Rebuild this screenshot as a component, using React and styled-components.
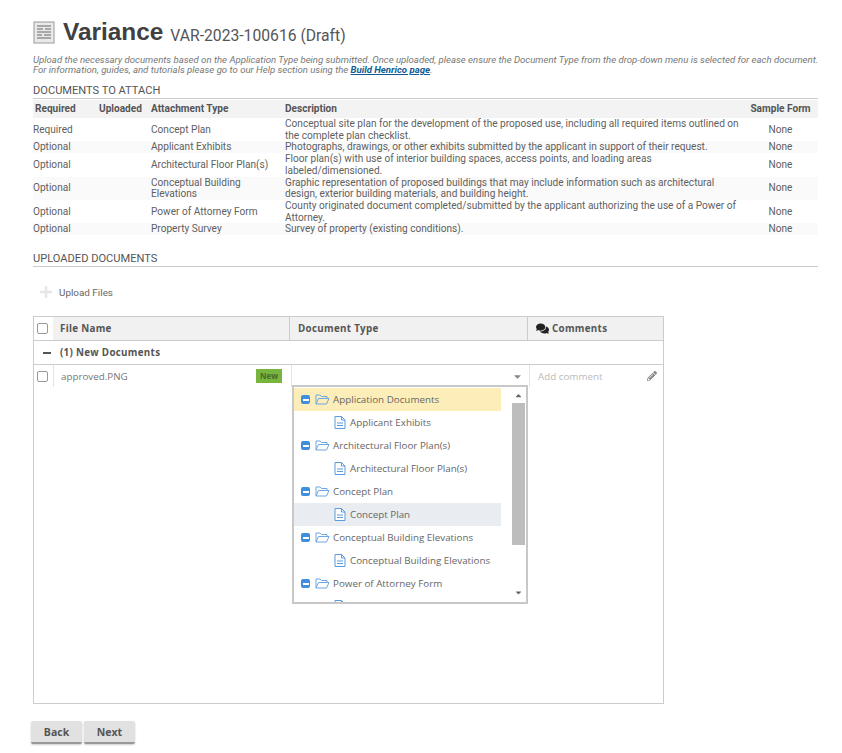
import React from "react";
import styled, { createGlobalStyle } from "styled-components";
import { FaComments, FaPencilAlt, FaPlus, FaCaretDown, FaCaretUp } from "react-icons/fa";

const GlobalStyle = createGlobalStyle`
  html, body {
    margin: 0;
    padding: 0;
    background: #fff;
  }
  body {
    font-family: Roboto, "Liberation Sans", sans-serif;
    color: #555;
  }
`;

const Page = styled.div`
  width: 842px;
  height: 753px;
  box-sizing: border-box;
  padding: 17px 24px 0 33px;
  overflow: hidden;
`;

const TitleRow = styled.div`
  display: flex;
  align-items: center;
  height: 30px;
`;

const TitleIcon = styled.svg`
  width: 22px;
  height: 23px;
  margin-right: 8px;
`;

const Title = styled.h1`
  margin: 0;
  font-family: "Liberation Sans", Arial, sans-serif;
  font-size: 24.4px;
  font-weight: 700;
  color: #404040;
`;

const RecordId = styled.span`
  margin: 6px 0 0 7px;
  font-size: 15.7px;
  color: #555;
`;

const Intro = styled.p`
  margin: 8px 0 0;
  font-size: 9.6px;
  line-height: 10px;
  font-style: italic;
  color: #777;
  white-space: nowrap;
`;

const HelpLink = styled.a`
  font-weight: 700;
  color: #0f5c94;
  text-decoration: underline;
`;

const SectionTitle = styled.div`
  margin-top: ${(p) => p.$top}px;
  padding-bottom: 1px;
  height: 12px;
  line-height: 12px;
  font-size: 11.1px;
  color: #555;
  border-bottom: 1px solid #ccc;
`;

const AttachTable = styled.div`
  display: grid;
  grid-template-columns: 64px 52px 134px 460px 75px;
  margin-top: 1px;
  font-size: 10.1px;
  line-height: 11.7px;
  color: #5f5f5f;
`;

const HeadCell = styled.div`
  height: 18px;
  line-height: 18px;
  padding-left: ${(p) => (p.$center ? 0 : 2)}px;
  background: #f3f3f3;
  font-weight: 700;
  color: #555;
  white-space: nowrap;
  text-align: ${(p) => (p.$center ? "center" : "left")};
`;

const BodyCell = styled.div`
  display: flex;
  align-items: center;
  justify-content: ${(p) => (p.$center ? "center" : "flex-start")};
  background: ${(p) => (p.$odd ? "#fafafa" : "#fff")};
  padding-left: ${(p) => p.$pad || 0}px;
`;

const Toolbar = styled.div`
  display: flex;
  align-items: center;
  height: 24px;
  margin-top: 13px;
  padding-left: 6px;
  font-size: 9.9px;
  color: #666;
  svg {
    width: 14px;
    height: 14px;
    color: #e6e6e6;
    margin-right: 6px;
  }
`;

const GridBox = styled.div`
  position: relative;
  width: 631px;
  height: 388px;
  box-sizing: border-box;
  margin-top: 12px;
  border: 1px solid #ccc;
  font-family: "Open Sans", sans-serif;
  font-size: 9.8px;
`;

const GridHeader = styled.div`
  display: grid;
  grid-template-columns: 19px 236px 238px 1fr;
  height: 24px;
  border-bottom: 1px solid #ccc;
  box-sizing: border-box;
  background: #f1f1f1;
  font-weight: 700;
  color: #555;
  letter-spacing: 0.3px;
`;

const HeaderCell = styled.div`
  display: flex;
  align-items: center;
  gap: 3px;
  padding-left: ${(p) => p.$pad || 7}px;
  border-left: ${(p) => (p.$line ? "1px solid #ccc" : "none")};
  background: ${(p) => (p.$plain ? "#fff" : "transparent")};
  svg {
    width: 13px;
    height: 13px;
    color: #222;
  }
`;

const Check = styled.span`
  display: block;
  width: 9px;
  height: 9px;
  border: 1px solid #999;
  border-radius: 2px;
  background: #fff;
`;

const GroupRow = styled.div`
  display: flex;
  align-items: center;
  height: 24px;
  box-sizing: border-box;
  padding-left: 9px;
  border-bottom: 1px solid #ccc;
  font-weight: 700;
  color: #555;
  letter-spacing: 0.3px;
`;

const GroupDash = styled.span`
  width: 8px;
  height: 2px;
  margin-right: 9px;
  background: #555;
`;

const FileRow = styled.div`
  display: grid;
  grid-template-columns: 19px 238px 238px 1fr;
  height: 22px;
`;

const FileCell = styled.div`
  display: flex;
  align-items: center;
  justify-content: ${(p) => (p.$spread ? "space-between" : "flex-start")};
  padding: 0 ${(p) => p.$right || 0}px 0 ${(p) => p.$pad || 0}px;
  border-left: ${(p) => (p.$line ? "1px solid #e4e4e4" : "none")};
  color: #777;
  svg {
    width: ${(p) => p.$icon || 10}px;
    height: ${(p) => p.$icon || 10}px;
    color: #888;
  }
`;

const NewBadge = styled.span`
  width: 26px;
  height: 14px;
  line-height: 14px;
  text-align: center;
  font-size: 8px;
  font-weight: 700;
  color: #4a6a2c;
  background: #77b53f;
`;

const Placeholder = styled.span`
  color: #bbb;
`;

const TreePopup = styled.div`
  position: absolute;
  left: 258px;
  top: 68px;
  width: 236px;
  height: 219px;
  box-sizing: border-box;
  border: 2px solid #c8c8c8;
  background: #fff;
  display: flex;
  overflow: hidden;
  color: #666;
`;

const TreeList = styled.div`
  width: 207px;
  margin-top: 1px;
`;

const TreeRow = styled.div`
  display: flex;
  align-items: center;
  flex: none;
  height: 23px;
  padding-left: ${(p) => (p.$child ? 40 : 7)}px;
  background: ${(p) => (p.$selected ? "#fdeeb9" : p.$hover ? "#e9edf2" : "transparent")};
  white-space: nowrap;
`;

const MinusBox = styled.span`
  position: relative;
  width: 9px;
  height: 9px;
  margin-right: 5px;
  border-radius: 2px;
  background: #3f8fdc;
  &::after {
    content: "";
    position: absolute;
    left: 1.5px;
    right: 1.5px;
    top: 3.5px;
    height: 2px;
    background: #fff;
  }
`;

const NodeIcon = styled.svg`
  width: ${(p) => p.$w}px;
  height: 13px;
  margin-right: ${(p) => p.$gap}px;
  flex: none;
`;

const ScrollTrack = styled.div`
  display: flex;
  flex-direction: column;
  align-items: center;
  width: 15px;
  margin-left: 10px;
  padding-top: 4px;
  svg {
    flex: none;
    width: 9px;
    height: 9px;
    color: #666;
  }
`;

const ScrollThumb = styled.div`
  flex: none;
  width: 13px;
  height: 142px;
  margin: 3px 0 43px;
  background: #bdbdbd;
`;

const Buttons = styled.div`
  display: flex;
  gap: 2px;
  margin: 17px 0 0 -2px;
`;

const Button = styled.button`
  width: 51px;
  height: 23px;
  padding: 0;
  border: none;
  border-bottom: 2px solid #999;
  border-radius: 2px;
  background: #e1e1e1;
  box-shadow: 0 1px 2px rgba(0, 0, 0, 0.2);
  font-family: "Open Sans", sans-serif;
  font-size: 10.5px;
  font-weight: 700;
  color: #555;
`;

const attachments = [
  ["Required", "Concept Plan", "Conceptual site plan for the development of the proposed use, including all required items outlined on the complete plan checklist."],
  ["Optional", "Applicant Exhibits", "Photographs, drawings, or other exhibits submitted by the applicant in support of their request."],
  ["Optional", "Architectural Floor Plan(s)", "Floor plan(s) with use of interior building spaces, access points, and loading areas labeled/dimensioned."],
  ["Optional", "Conceptual Building Elevations", "Graphic representation of proposed buildings that may include information such as architectural design, exterior building materials, and building height."],
  ["Optional", "Power of Attorney Form", "County originated document completed/submitted by the applicant authorizing the use of a Power of Attorney."],
  ["Optional", "Property Survey", "Survey of property (existing conditions)."],
];

const tree = [
  ["Application Documents", "Applicant Exhibits"],
  ["Architectural Floor Plan(s)", "Architectural Floor Plan(s)"],
  ["Concept Plan", "Concept Plan"],
  ["Conceptual Building Elevations", "Conceptual Building Elevations"],
  ["Power of Attorney Form", ""],
];

const FormIcon = () => (
  <TitleIcon viewBox="0 0 22 23">
    <rect x="1" y="1" width="20" height="21" fill="#e9e9e9" stroke="#9a9a9a" />
    <path d="M4 5h14M4 8h6M12 8h6M4 11h14M4 14h5M11 14h7M4 17h14" stroke="#666" strokeWidth="1.2" />
  </TitleIcon>
);

const FolderIcon = () => (
  <NodeIcon $w={15} $gap={3} viewBox="0 0 15 13" fill="none" stroke="#6ea6e0" strokeWidth="1">
    <path d="M1 11V2h4l1.5 1.5H12V5.5M1 11l2.5-5.5H14L11.5 11z" />
  </NodeIcon>
);

const FileIcon = () => (
  <NodeIcon $w={12} $gap={4} viewBox="0 0 12 13" fill="#fff" stroke="#5b9be0" strokeWidth="1">
    <path d="M1 .5h6.5L11 4v8.5H1z" />
    <path d="M7.5.5V4H11M3 7h6M3 9.5h6" fill="none" />
  </NodeIcon>
);

const App = () => {
  return (
    <Page>
      <GlobalStyle />
      <TitleRow>
        <FormIcon />
        <Title>Variance</Title>
        <RecordId>VAR-2023-100616 (Draft)</RecordId>
      </TitleRow>
      <Intro>
        Upload the necessary documents based on the Application Type being submitted. Once uploaded, please ensure the Document Type from the drop-down menu is selected for each document.
        <br />
        For information, guides, and tutorials please go to our Help section using the <HelpLink href="#">Build Henrico page</HelpLink>.
      </Intro>

      <SectionTitle $top={10}>DOCUMENTS TO ATTACH</SectionTitle>
      <AttachTable>
        <HeadCell>Required</HeadCell>
        <HeadCell>Uploaded</HeadCell>
        <HeadCell>Attachment Type</HeadCell>
        <HeadCell>Description</HeadCell>
        <HeadCell $center>Sample Form</HeadCell>
        {attachments.map(([required, type, description], i) => (
          <React.Fragment key={type}>
            <BodyCell $odd={i % 2 === 1}>{required}</BodyCell>
            <BodyCell $odd={i % 2 === 1} />
            <BodyCell $odd={i % 2 === 1} $pad={2}>{type}</BodyCell>
            <BodyCell $odd={i % 2 === 1} $pad={2}>{description}</BodyCell>
            <BodyCell $odd={i % 2 === 1} $center>None</BodyCell>
          </React.Fragment>
        ))}
      </AttachTable>

      <SectionTitle $top={18}>UPLOADED DOCUMENTS</SectionTitle>
      <Toolbar>
        <FaPlus />
        Upload Files
      </Toolbar>

      <GridBox>
        <GridHeader>
          <HeaderCell $pad={3} $plain><Check /></HeaderCell>
          <HeaderCell>File Name</HeaderCell>
          <HeaderCell $line $pad={8}>Document Type</HeaderCell>
          <HeaderCell $line $pad={8}><FaComments />Comments</HeaderCell>
        </GridHeader>
        <GroupRow>
          <GroupDash />
          (1) New Documents
        </GroupRow>
        <FileRow>
          <FileCell $pad={3}><Check /></FileCell>
          <FileCell $line $spread $pad={7} $right={9}>
            approved.PNG
            <NewBadge>New</NewBadge>
          </FileCell>
          <FileCell $line $spread $right={6} $icon={11}>
            <span />
            <FaCaretDown />
          </FileCell>
          <FileCell $line $spread $pad={8} $right={6}>
            <Placeholder>Add comment</Placeholder>
            <FaPencilAlt />
          </FileCell>
        </FileRow>
        <TreePopup>
          <TreeList>
            {tree.map(([folder, file], i) => (
              <React.Fragment key={folder}>
                <TreeRow $selected={i === 0}>
                  <MinusBox />
                  <FolderIcon />
                  {folder}
                </TreeRow>
                <TreeRow $child $hover={i === 2}>
                  <FileIcon />
                  {file}
                </TreeRow>
              </React.Fragment>
            ))}
          </TreeList>
          <ScrollTrack>
            <FaCaretUp />
            <ScrollThumb />
            <FaCaretDown />
          </ScrollTrack>
        </TreePopup>
      </GridBox>

      <Buttons>
        <Button>Back</Button>
        <Button>Next</Button>
      </Buttons>
    </Page>
  );
};

export default App;
